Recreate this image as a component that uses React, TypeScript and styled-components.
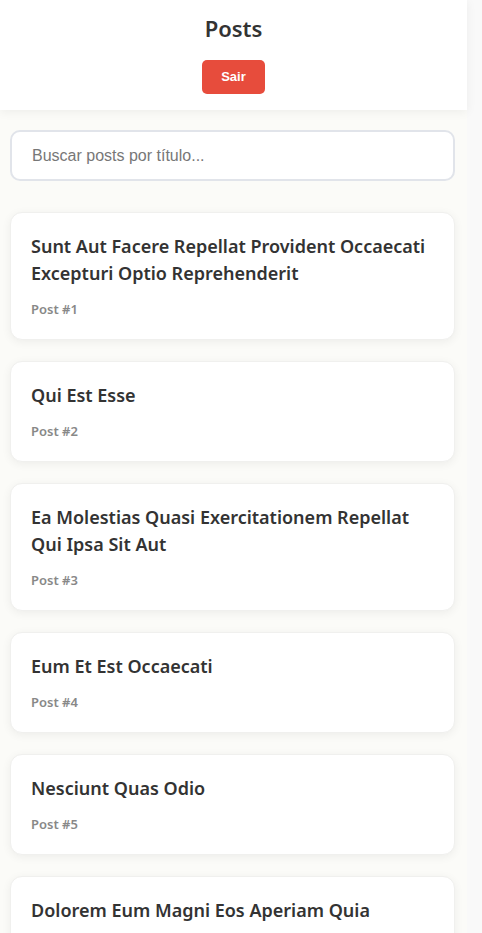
import styled, { createGlobalStyle } from "styled-components";
import { useState } from "react";

const GlobalStyle = createGlobalStyle`
  html {
    overflow-y: scroll;
    background-color: #f9f9f9;
  }

  body {
    margin: 0;
    font-family: "Segoe UI", "Noto Sans", sans-serif;
    color: #333;
  }

  #root {
    width: calc(100% - 15px);
    background-color: #fbfbf8;
  }
`;

const Header = styled.header`
  background: #fff;
  padding: 12px 0 16px;
  text-align: center;
  box-shadow: 0 2px 10px rgba(0, 0, 0, 0.06);
`;

const Title = styled.h1`
  margin: 0 0 16px;
  font-size: 22px;
  line-height: 32px;
  font-weight: 600;
  color: #333;
`;

const LogoutBtn = styled.button`
  background: #e74c3c;
  color: #fff;
  border: none;
  border-radius: 5px;
  padding: 10px 19px;
  font-family: "Liberation Sans", Arial, sans-serif;
  font-size: 13px;
  font-weight: bold;
  line-height: 14px;
  cursor: pointer;
`;

const Main = styled.main`
  padding: 20px 12px 20px 10px;
`;

const Search = styled.input`
  display: block;
  width: 100%;
  box-sizing: border-box;
  padding: 15px 20px;
  font-family: "Liberation Sans", Arial, sans-serif;
  font-size: 16px;
  line-height: 17px;
  border: 2px solid #e1e4ea;
  border-radius: 10px;
  background: #fff;
  outline: none;
  margin-bottom: 31px;

  &::placeholder {
    color: #777;
  }
`;

const List = styled.div`
  display: flex;
  flex-direction: column;
  gap: 21px;
`;

const Card = styled.div`
  background: #fff;
  border: 1px solid #f0f0ee;
  border-radius: 12px;
  padding: 20px;
  box-shadow: 0 2px 10px rgba(0, 0, 0, 0.06);
`;

const CardTitle = styled.h3`
  margin: 0 0 12px;
  font-size: 18px;
  line-height: 27px;
  font-weight: 600;
  color: #333;
`;

const Meta = styled.div`
  font-size: 13px;
  line-height: 20px;
  font-weight: 600;
  color: #888;
`;

// titles as they come from the api (lowercase)
const titles = [
  "sunt aut facere repellat provident occaecati excepturi optio reprehenderit",
  "qui est esse",
  "ea molestias quasi exercitationem repellat qui ipsa sit aut",
  "eum et est occaecati",
  "nesciunt quas odio",
  "dolorem eum magni eos aperiam quia",
  "magnam facilis autem",
  "dolorem dolore est ipsam",
  "nesciunt iure omnis dolorem tempora et accusantium",
  "optio molestias id quia eum",
  "et ea vero quia laudantium autem",
  "in quibusdam tempore odit est dolorem",
  "dolorum ut in voluptas mollitia et saepe quo animi",
  "voluptatem eligendi optio",
  "eveniet quod temporibus",
  "sint suscipit perspiciatis velit dolorum rerum ipsa laboriosam odio",
  "fugit voluptas sed molestias voluptatem provident",
  "voluptate et itaque vero tempora molestiae",
  "adipisci placeat illum aut reiciendis qui",
  "doloribus ad provident suscipit at",
  "asperiores ea ipsam voluptatibus modi minima quia sint",
  "dolor sint quo a velit explicabo quia nam",
  "maxime id vitae nihil numquam",
  "autem hic labore sunt dolores incidunt",
  "rem alias distinctio quo quis",
  "est et quae odit qui non",
  "quasi id et eos tenetur aut quo autem",
  "delectus ullam et corporis nulla voluptas sequi",
  "iusto eius quod necessitatibus culpa ea",
  "a quo magni similique perferendis",
  "ullam ut quidem id aut vel consequuntur",
  "doloremque illum aliquid sunt",
  "qui explicabo molestiae dolorem",
  "magnam ut rerum iure",
  "id nihil consequatur molestias animi provident",
  "fuga nam accusamus voluptas reiciendis itaque",
  "provident vel ut sit ratione est",
  "explicabo et eos deleniti nostrum ab id repellendus",
  "eos dolorem iste accusantium est eaque quam",
  "enim quo cumque",
  "non est facere",
  "commodi ullam sint et excepturi error explicabo praesentium voluptas",
  "eligendi iste nostrum consequuntur adipisci praesentium sit beatae perferendis",
  "optio dolor molestias sit",
  "ut numquam possimus omnis eius suscipit laudantium iure",
  "aut quo modi neque nostrum ducimus",
  "quibusdam cumque rem aut deserunt",
  "ut voluptatem illum ea doloribus itaque eos",
  "laborum non sunt aut ut assumenda perspiciatis voluptas",
  "repellendus qui recusandae incidunt voluptates tenetur qui omnis exercitationem",
  "soluta aliquam aperiam consequatur illo quis voluptas",
  "qui enim et consequuntur quia animi quis voluptate quibusdam",
  "ut quo aut ducimus alias",
  "sit asperiores ipsam eveniet odio non quia",
  "sit vel voluptatem et non libero",
  "qui et at rerum necessitatibus",
  "sed ab est est",
  "voluptatum itaque dolores nisi et quasi",
  "qui commodi dolor at maiores et quis id accusantium",
  "consequatur placeat omnis quisquam quia reprehenderit fugit veritatis facere",
  "voluptatem doloribus consectetur est ut ducimus",
  "beatae enim quia vel",
  "voluptas blanditiis repellendus animi ducimus error sapiente et suscipit",
  "et fugit quas eum in in aperiam quod",
  "consequatur id enim sunt et et",
  "repudiandae ea animi iusto",
  "aliquid eos sed fuga est maxime repellendus",
  "odio quis facere architecto reiciendis optio",
  "fugiat quod pariatur odit minima",
  "voluptatem laborum magni",
  "et iusto veniam et illum aut fuga",
  "sint hic doloribus consequatur eos non id",
  "consequuntur deleniti eos quia temporibus ab aliquid at",
  "enim unde ratione doloribus quas enim ut sit sapiente",
  "dignissimos eum dolor ut enim et delectus in",
  "doloremque officiis ad et non perferendis",
  "necessitatibus quasi exercitationem odio",
  "quam voluptatibus rerum veritatis",
  "pariatur consequatur quia magnam autem omnis non amet",
  "labore in ex et explicabo corporis aut quas",
  "tempora rem veritatis voluptas quo dolores vero",
  "laudantium voluptate suscipit sunt enim enim",
  "odit et voluptates doloribus alias odio et",
  "optio ipsam molestias necessitatibus occaecati facilis veritatis dolores aut",
  "dolore veritatis porro provident adipisci blanditiis et sunt",
  "placeat quia et porro iste",
  "nostrum quis quasi placeat",
  "sapiente omnis fugit eos",
  "sint soluta et vel magnam aut ut sed qui",
  "ad iusto omnis odit dolor voluptatibus",
  "aut amet sed",
  "ratione ex tenetur perferendis",
  "beatae soluta recusandae",
  "qui qui voluptates illo iste minima",
  "id minus libero illum nam ad officiis",
  "quaerat velit veniam amet cupiditate aut numquam ut sequi",
  "quas fugiat ut perspiciatis vero provident",
  "laboriosam dolor voluptates",
  "temporibus sit alias delectus eligendi possimus magni",
  "at nam consequatur ea labore ea harum",
];

const capitalize = (s: string) =>
  s.split(" ").map((w) => w.charAt(0).toUpperCase() + w.slice(1)).join(" ");

const App = () => {
  const [query, setQuery] = useState<string>("");

  const posts = titles
    .map((t, i) => ({ id: i + 1, title: capitalize(t) }))
    .filter((p) => p.title.toLowerCase().includes(query.toLowerCase()));

  return (
    <>
      <GlobalStyle />
      <Header>
        <Title>Posts</Title>
        <LogoutBtn>Sair</LogoutBtn>
      </Header>
      <Main>
        <Search
          placeholder="Buscar posts por título..."
          value={query}
          onChange={(e) => setQuery(e.target.value)}
        />
        <List>
          {posts.map((post) => (
            <Card key={post.id}>
              <CardTitle>{post.title}</CardTitle>
              <Meta>Post #{post.id}</Meta>
            </Card>
          ))}
        </List>
      </Main>
    </>
  );
};

export default App;
